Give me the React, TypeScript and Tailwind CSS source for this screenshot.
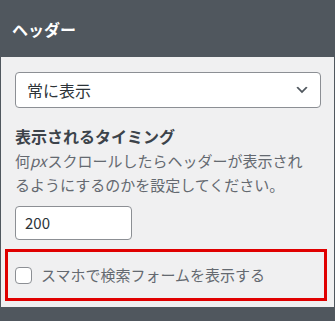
import React from 'react';

const font = { fontFamily: '"Noto Sans CJK JP", "Noto Sans", sans-serif' };

const App = () => {
  return (
    <div
      className="flex h-[321px] w-[335px] flex-col overflow-hidden border-x border-[#50575e] bg-[#f0f0f1]"
      style={font}
    >
      <div className="flex h-[57px] shrink-0 items-center bg-[#50575e] px-[11px] text-[16px] font-bold text-white">
        ヘッダー
      </div>

      <div className="flex-1 px-[14px] pt-[15px]">
        <div className="flex h-[36px] w-[306px] items-center justify-between rounded border border-[#8c8f94] bg-white pl-[11px] pr-[10px] text-[16px] text-[#2c3338]">
          <span>常に表示</span>
          <svg width="16" height="16" viewBox="0 0 20 20" fill="#50575e">
            <path d="M5 6l5 5 5-5 2 1-7 7-7-7 2-1z" />
          </svg>
        </div>

        <div className="mt-[16px] text-[16px] font-bold leading-[24px] text-[#3c434a]">
          表示されるタイミング
        </div>
        <p className="mt-px w-[292px] text-[15px] leading-[24px] text-[#646970]">
          何<i className="pr-px">px</i>スクロールしたらヘッダーが表示されるようにするのかを設定してください。
        </p>

        <div className="mt-[9px] flex h-[34px] w-[117px] items-center rounded border border-[#8c8f94] bg-white pl-[9px] text-[15px] text-[#2c3338]">
          200
        </div>

        <div className="ml-[-10px] mt-[9px] flex h-[52px] w-[322px] items-center gap-[9px] border-[3px] border-[#e00000] pl-[7px]">
          <span className="h-[17px] w-[17px] rounded border border-[#8c8f94] bg-white" />
          <span className="text-[15px] text-[#646970]">スマホで検索フォームを表示する</span>
        </div>
      </div>

      <div className="h-[14px] shrink-0 bg-[#50575e]" />
    </div>
  );
};

export default App;
